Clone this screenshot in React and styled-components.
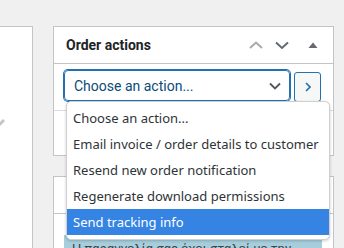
import React from "react";
import styled, { createGlobalStyle } from "styled-components";

const GlobalStyle = createGlobalStyle`
    html, body {
        margin: 0;
        padding: 0;
        background: #f0f0f1;
        overflow: hidden;
    }
    body {
        font-family: Roboto, "Liberation Sans", sans-serif;
        color: #1d2327;
    }
`;

const Page = styled.div`
    display: flex;
    align-items: flex-start;
    padding-top: 26px;
    height: 248px;
    box-sizing: border-box;
    overflow: hidden;
`;

const LeftBox = styled.div`
    width: 32px;
    height: 240px;
    background: #fff;
    border-top: 1px solid #c3c4c7;
    border-right: 1px solid #c3c4c7;
    position: relative;
    flex-shrink: 0;
`;

const Pencil = styled.svg`
    position: absolute;
    left: -2px;
    top: 91px;
`;

const Side = styled.div`
    margin-left: 20px;
    width: 281px;
    display: flex;
    flex-direction: column;
    gap: 20px;
`;

const Panel = styled.div`
    background: #fff;
    border: 1px solid #c3c4c7;
    box-sizing: border-box;
`;

const PanelHeader = styled.div`
    height: 36px;
    border-bottom: 1px solid #c3c4c7;
    display: flex;
    align-items: center;
    padding: 0 12px;
`;

const Title = styled.h2`
    flex: 1;
    margin: 0;
    font-size: 14px;
    font-weight: 700;
    color: #1d2327;
`;

const HeaderIcons = styled.div`
    display: flex;
    align-items: center;
    gap: 12px;
    margin-right: 2px;
`;

const ActionRow = styled.div`
    position: relative;
    display: flex;
    align-items: flex-start;
    gap: 4px;
    padding: 6px 11px 8px 10px;
`;

const SelectBox = styled.div`
    width: 226px;
    height: 31px;
    box-sizing: border-box;
    border: 1px solid #2271b1;
    box-shadow: 0 0 0 1px #2271b1;
    border-radius: 4px;
    display: flex;
    align-items: center;
    justify-content: space-between;
    padding: 0 8px 0 9px;
    font-size: 14px;
    color: #0a4b78;
`;

const GoButton = styled.div`
    width: 27px;
    height: 30px;
    margin-top: 2px;
    box-sizing: border-box;
    border: 1px solid #2271b1;
    border-radius: 3px;
    background: #f6f7f7;
    display: flex;
    align-items: center;
    justify-content: center;
`;

const Footer = styled.div`
    height: 44px;
    border-top: 1px solid #dcdcde;
`;

const Dropdown = styled.ul`
    position: absolute;
    left: 12px;
    top: 37px;
    width: 264px;
    margin: 0;
    padding: 3px 0 4px;
    list-style: none;
    background: #fff;
    border: 1px solid #d0d0d0;
    border-radius: 5px;
    box-shadow: 0 1px 3px rgba(0, 0, 0, 0.2);
    box-sizing: border-box;
    z-index: 2;
    font-family: "Noto Sans", "DejaVu Sans", sans-serif;
    font-size: 13px;
`;

const Option = styled.li`
    height: 26px;
    line-height: 26px;
    padding-left: 6px;
    white-space: nowrap;
    color: ${(p) => (p.$active ? "#fff" : "#2e3436")};
    background: ${(p) => (p.$active ? "#3584e4" : "transparent")};
`;

const NotesBody = styled.div`
    padding: 21px 11px 0 10px;
`;

const Note = styled.div`
    background: #a7cedc;
    padding: 6px 8px;
    font-size: 13px;
    line-height: 16px;
    color: #3c434a;
    white-space: nowrap;
    overflow: hidden;
`;

const options = [
    "Choose an action...",
    "Email invoice / order details to customer",
    "Resend new order notification",
    "Regenerate download permissions",
    "Send tracking info",
];

function Chevron({ dir, color }) {
    const pts = dir === "up" ? "1,7 7,1.5 13,7" : "1,1.5 7,7 13,1.5";
    return (
        <svg width="14" height="9" viewBox="0 0 14 9">
            <polyline points={pts} fill="none" stroke={color} strokeWidth="2" />
        </svg>
    );
}

function App() {
    return (
        <>
            <GlobalStyle />
            <Page>
                <LeftBox>
                    <Pencil width="8" height="8" viewBox="0 0 8 8">
                        <path d="M0 6 L5 1 L7 3 L2 8 Z" fill="#c3c4c7" />
                    </Pencil>
                </LeftBox>
                <Side>
                    <Panel>
                        <PanelHeader>
                            <Title>Order actions</Title>
                            <HeaderIcons>
                                <Chevron dir="up" color="#a7aaad" />
                                <Chevron dir="down" color="#646970" />
                                <svg width="12" height="8" viewBox="0 0 12 8" style={{ marginLeft: 6 }}>
                                    <polygon points="1.5,7 6,1.5 10.5,7" fill="#646970" />
                                </svg>
                            </HeaderIcons>
                        </PanelHeader>
                        <ActionRow>
                            <SelectBox>
                                <span>Choose an action...</span>
                                <svg width="12" height="8" viewBox="0 0 12 8">
                                    <polyline points="1,1.5 6,6.5 11,1.5" fill="none" stroke="#50575e" strokeWidth="1.8" />
                                </svg>
                            </SelectBox>
                            <GoButton>
                                <svg width="6" height="10" viewBox="0 0 6 10">
                                    <polyline points="1,1 5,5 1,9" fill="none" stroke="#2271b1" strokeWidth="1.6" />
                                </svg>
                            </GoButton>
                            <Dropdown>
                                {options.map((o, i) => (
                                    <Option key={o} $active={i === options.length - 1}>
                                        {o}
                                    </Option>
                                ))}
                            </Dropdown>
                        </ActionRow>
                        <Footer />
                    </Panel>
                    <Panel>
                        <PanelHeader>
                            <Title>Order notes</Title>
                        </PanelHeader>
                        <NotesBody>
                            <Note>Η παραγγελία σας έχει σταλεί με την</Note>
                        </NotesBody>
                    </Panel>
                </Side>
            </Page>
        </>
    );
}

export default App;
